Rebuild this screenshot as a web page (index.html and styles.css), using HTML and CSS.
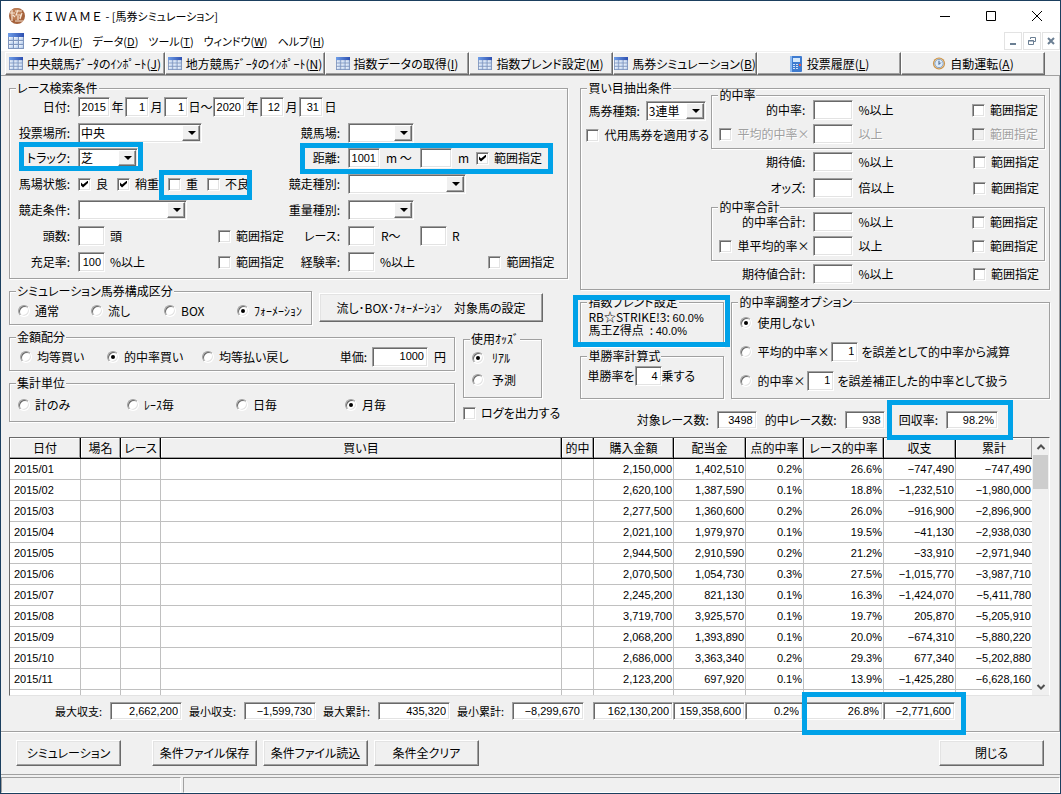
FILE: index.html
```html
<!DOCTYPE html>
<html lang="ja">
<head>
<meta charset="utf-8">
<title>ＫＩＷＡＭＥ - [馬券シミュレーション]</title>
<link rel="stylesheet" href="styles.css">
</head>
<body>
<svg class="defs" width="0" height="0" aria-hidden="true">
  <defs>
    <linearGradient id="gh" x1="0" y1="0" x2="1" y2="0"><stop offset="0" stop-color="#6f9ee8"/><stop offset="1" stop-color="#2d4fb0"/></linearGradient>
    <linearGradient id="gc" x1="0" y1="0" x2="1" y2="1"><stop offset="0" stop-color="#ffffff"/><stop offset="1" stop-color="#a9c4ea"/></linearGradient>
    <symbol id="grid" viewBox="0 0 16 16" preserveAspectRatio="none">
      <rect x="0" y="0" width="16" height="16" fill="#7f95bd"/>
      <rect x="0" y="0" width="16" height="4" fill="url(#gh)"/>
      <g fill="url(#gc)"><rect x="1" y="4" width="4" height="3"/><rect x="6" y="4" width="4" height="3"/><rect x="11" y="4" width="4" height="3"/><rect x="1" y="8" width="4" height="3"/><rect x="6" y="8" width="4" height="3"/><rect x="11" y="8" width="4" height="3"/><rect x="1" y="12" width="4" height="3"/><rect x="6" y="12" width="4" height="3"/><rect x="11" y="12" width="4" height="3"/></g>
    </symbol>
  </defs>
</svg>
<div class="window">
  <header class="titlebar">
    <svg class="logo" viewBox="0 0 18 18" aria-hidden="true"><circle cx="9" cy="9" r="8" fill="#a5623c"/><circle cx="8" cy="7" r="6" fill="#bd7e55"/><g stroke="#f6e3d2" stroke-width="1.2" fill="none"><path d="M4 3v11M2 6h5M7 4h7M10 3l-2 5h5l-1 3M7 14h8M10 9v4M14 6l-2 6M5 8l2 2"/></g></svg>
    <h1><span class="full">ＫＩＷＡＭＥ</span> - [馬券シミュレーション]</h1>
    <div class="wincontrols">
      <button aria-label="最小化"><svg viewBox="0 0 12 12"><path d="M1 6.500h10"/></svg></button>
      <button aria-label="最大化"><svg viewBox="0 0 12 12"><path d="M1.500 1.500h9v9h-9z"/></svg></button>
      <button aria-label="終了"><svg viewBox="0 0 12 12"><path d="M1 1l10 10M11 1L1 11"/></svg></button>
    </div>
  </header>
  <nav class="menubar">
    <svg class="ic16" aria-hidden="true"><use href="#grid"/></svg>
    <a href="#">ファイル(<u>F</u>)</a><a href="#">データ(<u>D</u>)</a><a href="#">ツール(<u>T</u>)</a><a href="#">ウィンドウ(<u>W</u>)</a><a href="#">ヘルプ(<u>H</u>)</a>
    <div class="mdicontrols">
      <button aria-label="子を最小化"><svg viewBox="0 0 10 10"><path d="M2 8h6" stroke-width="2"/></svg></button>
      <button aria-label="子を元に戻す"><svg viewBox="0 0 10 10"><path d="M3.500 3V1.500h5v4H7M1.500 4.500h5v4h-5zM1 5h6"/></svg></button>
      <button aria-label="子を閉じる"><svg viewBox="0 0 10 10"><path d="M2 2l6 6M8 2L2 8" stroke-width="2"/></svg></button>
    </div>
  </nav>
  <div class="toolbar">
    <button><svg class="ic14" aria-hidden="true"><use href="#grid"/></svg><span>中央競馬ﾃﾞｰﾀのｲﾝﾎﾟｰﾄ(<u>J</u>)</span></button>
    <button><svg class="ic14" aria-hidden="true"><use href="#grid"/></svg><span>地方競馬ﾃﾞｰﾀのｲﾝﾎﾟｰﾄ(<u>N</u>)</span></button>
    <button><svg class="ic14" aria-hidden="true"><use href="#grid"/></svg><span>指数データの取得(<u>I</u>)</span></button>
    <button><svg class="ic14" aria-hidden="true"><use href="#grid"/></svg><span>指数ブレンド設定(<u>M</u>)</span></button>
    <button><svg class="ic14" aria-hidden="true"><use href="#grid"/></svg><span>馬券シミュレーション(<u>B</u>)</span></button>
    <button><svg class="ic16b" viewBox="0 0 14 16" aria-hidden="true"><rect x="1" y="0" width="12" height="16" rx="1" fill="#3e7bd0"/><rect x="1" y="0" width="2" height="16" fill="#8bb8f0"/><rect x="4" y="2" width="7" height="4" fill="#d5e8fb"/><g fill="#cfe0f7"><rect x="4" y="8" width="2" height="1"/><rect x="7" y="8" width="2" height="1"/><rect x="4" y="10" width="2" height="1"/><rect x="7" y="10" width="2" height="1"/><rect x="4" y="12" width="2" height="1"/><rect x="7" y="12" width="2" height="1"/></g><rect x="10" y="8" width="2" height="2" fill="#e2574c"/></svg><span>投票履歴(<u>L</u>)</span></button>
    <button><svg class="ic14" viewBox="0 0 14 14" aria-hidden="true"><circle cx="7" cy="7" r="6.500" fill="#c98f45"/><circle cx="7" cy="7" r="5.500" fill="#f3d39a"/><circle cx="7" cy="7" r="4.500" fill="#dcebfb" stroke="#7d9cc4"/><path d="M7 4v4l2-2" fill="none" stroke="#33527d"/></svg><span>自動運転(<u>A</u>)</span></button>
  </div>

  <main class="client">
    <div class="forms">
      <div class="leftcol">
        <fieldset>
          <legend>レース検索条件</legend>
          <div class="search">
            <label class="lab" for="y1">日付:</label>
            <div class="cell dates">
              <input class="w32" id="y1" value="2015"><span>年</span><input class="w24" aria-label="開始月" value="1"><span>月</span><input class="w24" aria-label="開始日" value="1"><span class="wide">日～</span><input class="w32" aria-label="終了年" value="2020"><span>年</span><input class="w24" aria-label="終了月" value="12"><span>月</span><input class="w24" aria-label="終了日" value="31"><span>日</span>
            </div>
            <span></span><span></span>

            <label class="lab" for="place">投票場所:</label>
            <div class="cell"><span class="combo c124"><select id="place"><option>中央</option></select></span></div>
            <label class="lab" for="course">競馬場:</label>
            <div class="cell"><span class="combo c66"><select id="course"><option></option></select></span></div>

            <label class="lab" for="track">トラック:</label>
            <div class="cell"><span class="combo c60"><select id="track"><option>芝</option></select></span><i class="mark m-track"></i></div>
            <label class="lab" for="dist">距離:</label>
            <div class="cell dist"><input class="w32" id="dist" value="1001"><span class="u40">m ～</span><input class="w32" aria-label="距離上限"><span class="u24">m</span><label class="opt"><input type="checkbox" checked>範囲指定</label><i class="mark m-dist"></i></div>

            <span class="lab">馬場状態:</span>
            <div class="cell going"><label class="opt"><input type="checkbox" checked>良</label><label class="opt"><input type="checkbox" checked>稍重</label><label class="opt"><input type="checkbox">重</label><label class="opt"><input type="checkbox">不良</label><i class="mark m-going"></i></div>
            <label class="lab" for="kind">競走種別:</label>
            <div class="cell"><span class="combo c118"><select id="kind"><option></option></select></span></div>

            <label class="lab" for="cond">競走条件:</label>
            <div class="cell"><span class="combo c109"><select id="cond"><option></option></select></span></div>
            <label class="lab" for="wt">重量種別:</label>
            <div class="cell"><span class="combo c66"><select id="wt"><option></option></select></span></div>

            <label class="lab" for="heads">頭数:</label>
            <div class="cell"><input class="w27" id="heads"><span class="unit">頭</span><label class="opt end"><input type="checkbox">範囲指定</label></div>
            <label class="lab" for="race">レース:</label>
            <div class="cell"><input class="w27" id="race"><span class="u45">R～</span><input class="w27" aria-label="レース上限"><span class="unit">R</span></div>

            <label class="lab" for="fill">充足率:</label>
            <div class="cell"><input class="w27" id="fill" value="100"><span class="unit">%以上</span><label class="opt end"><input type="checkbox">範囲指定</label></div>
            <label class="lab" for="exp">経験率:</label>
            <div class="cell exp"><input class="w27" id="exp"><span class="unit">%以上</span><label class="opt end"><input type="checkbox">範囲指定</label></div>
          </div>
        </fieldset>

        <div class="buildrow">
          <fieldset class="fs-kind">
            <legend>シミュレーション馬券構成区分</legend>
            <div class="radios four73">
              <label class="opt"><input type="radio" name="k">通常</label><label class="opt"><input type="radio" name="k">流し</label><label class="opt"><input type="radio" name="k">BOX</label><label class="opt"><input type="radio" name="k" checked>ﾌｫｰﾒｰｼｮﾝ</label>
            </div>
          </fieldset>
          <button class="btn target">流し･BOX･ﾌｫｰﾒｰｼｮﾝ　対象馬の設定</button>
        </div>

        <div class="moneyrow">
          <div class="stack">
            <fieldset>
              <legend>金額配分</legend>
              <div class="radios money">
                <label class="opt"><input type="radio" name="m">均等買い</label><label class="opt"><input type="radio" name="m" checked>的中率買い</label><label class="opt"><input type="radio" name="m">均等払い戻し</label>
                <label class="price" for="price">単価:</label><input class="w56" id="price" value="1000"><span class="yen">円</span>
              </div>
            </fieldset>
            <fieldset>
              <legend>集計単位</legend>
              <div class="radios four109">
                <label class="opt"><input type="radio" name="s">計のみ</label><label class="opt"><input type="radio" name="s">ﾚｰｽ毎</label><label class="opt"><input type="radio" name="s">日毎</label><label class="opt"><input type="radio" name="s" checked>月毎</label>
              </div>
            </fieldset>
          </div>
          <div class="oddscol">
            <fieldset>
              <legend>使用ｵｯｽﾞ</legend>
              <div class="oddsradios"><label class="opt"><input type="radio" name="o" checked>ﾘｱﾙ</label><label class="opt"><input type="radio" name="o">予測</label></div>
            </fieldset>
            <label class="opt log"><input type="checkbox">ログを出力する</label>
          </div>
        </div>
      </div>

      <div class="rightcol">
        <fieldset>
          <legend>買い目抽出条件</legend>
          <div class="extract">
            <div class="ticket">
              <div class="cell"><label for="tk">馬券種類:</label><span class="combo c60"><select id="tk"><option>3連単</option></select></span></div>
              <label class="opt sub"><input type="checkbox">代用馬券を適用する</label>
            </div>
            <div class="conds">
              <fieldset class="inner">
                <legend>的中率</legend>
                <div class="innerrows">
                  <div class="cond"><label class="lab" for="c1">的中率:</label><input id="c1"><span>%以上</span><label class="opt"><input type="checkbox">範囲指定</label></div>
                  <div class="cond off"><label class="opt mul"><input type="checkbox">平均的中率×</label><input aria-label="平均的中率"><span>以上</span><label class="opt"><input type="checkbox" disabled>範囲指定</label></div>
                </div>
              </fieldset>
              <div class="cond tall"><label class="lab" for="c3">期待値:</label><input id="c3"><span>%以上</span><label class="opt"><input type="checkbox">範囲指定</label></div>
              <div class="cond tall"><label class="lab" for="c4">オッズ:</label><input id="c4"><span>倍以上</span><label class="opt"><input type="checkbox">範囲指定</label></div>
              <fieldset class="inner">
                <legend>的中率合計</legend>
                <div class="innerrows">
                  <div class="cond"><label class="lab" for="c5">的中率合計:</label><input id="c5"><span>%以上</span><label class="opt"><input type="checkbox">範囲指定</label></div>
                  <div class="cond"><label class="opt mul"><input type="checkbox">単平均的率×</label><input aria-label="単平均的率"><span>以上</span><label class="opt"><input type="checkbox">範囲指定</label></div>
                </div>
              </fieldset>
              <div class="cond tall"><label class="lab" for="c7">期待値合計:</label><input id="c7"><span>%以上</span><label class="opt"><input type="checkbox">範囲指定</label></div>
            </div>
          </div>
        </fieldset>

        <div class="blendrow">
          <div class="blendcol">
            <fieldset class="blend">
              <legend>指数ブレンド設定</legend>
              <p>RB☆STRIKE!3: <span class="num">60.0%</span></p><p>馬王Z得点&ensp;: <span class="num">40.0%</span></p>
              <i class="mark m-blend"></i>
            </fieldset>
            <fieldset class="formula">
              <legend>単勝率計算式</legend>
              <div class="cell"><label for="pow">単勝率を</label><input class="w27" id="pow" value="4"><span>乗する</span></div>
            </fieldset>
          </div>
          <fieldset class="adjust">
            <legend>的中率調整オプション</legend>
            <div class="adj"><label class="opt"><input type="radio" name="a" checked>使用しない</label></div>
            <div class="adj"><label class="opt"><input type="radio" name="a">平均的中率×</label><input class="w27" aria-label="減算誤差" value="1"><span>を誤差として的中率から減算</span></div>
            <div class="adj"><label class="opt"><input type="radio" name="a">的中率×</label><input class="w27" aria-label="補正誤差" value="1"><span>を誤差補正した的中率として扱う</span></div>
          </fieldset>
        </div>

        <div class="stats">
          <label for="n1">対象レース数:</label><input class="w40" id="n1" value="3498">
          <label for="n2">的中レース数:</label><input class="w40" id="n2" value="938">
          <div class="cell ret"><label for="n3">回収率:</label><input class="w52" id="n3" value="98.2%"><i class="mark m-ret"></i></div>
        </div>
      </div>
    </div>

    <div class="gridbox">
      <div class="view">
        <table>
          <colgroup><col class="k70"><col class="k40"><col class="k40"><col><col class="k32"><col class="k80"><col class="k72"><col class="k58"><col class="k80"><col class="k72"><col class="k76"></colgroup>
          <thead><tr><th>日付</th><th>場名</th><th>レース</th><th>買い目</th><th>的中</th><th>購入金額</th><th>配当金</th><th>点的中率</th><th>レース的中率</th><th>収支</th><th>累計</th></tr></thead>
          <tbody>
            <tr><td>2015/01</td><td></td><td></td><td></td><td></td><td>2,150,000</td><td>1,402,510</td><td>0.2%</td><td>26.6%</td><td>−747,490</td><td>−747,490</td></tr>
            <tr><td>2015/02</td><td></td><td></td><td></td><td></td><td>2,620,100</td><td>1,387,590</td><td>0.1%</td><td>18.8%</td><td>−1,232,510</td><td>−1,980,000</td></tr>
            <tr><td>2015/03</td><td></td><td></td><td></td><td></td><td>2,277,500</td><td>1,360,600</td><td>0.2%</td><td>26.0%</td><td>−916,900</td><td>−2,896,900</td></tr>
            <tr><td>2015/04</td><td></td><td></td><td></td><td></td><td>2,021,100</td><td>1,979,970</td><td>0.1%</td><td>19.5%</td><td>−41,130</td><td>−2,938,030</td></tr>
            <tr><td>2015/05</td><td></td><td></td><td></td><td></td><td>2,944,500</td><td>2,910,590</td><td>0.2%</td><td>21.2%</td><td>−33,910</td><td>−2,971,940</td></tr>
            <tr><td>2015/06</td><td></td><td></td><td></td><td></td><td>2,070,500</td><td>1,054,730</td><td>0.3%</td><td>27.5%</td><td>−1,015,770</td><td>−3,987,710</td></tr>
            <tr><td>2015/07</td><td></td><td></td><td></td><td></td><td>2,245,200</td><td>821,130</td><td>0.1%</td><td>16.3%</td><td>−1,424,070</td><td>−5,411,780</td></tr>
            <tr><td>2015/08</td><td></td><td></td><td></td><td></td><td>3,719,700</td><td>3,925,570</td><td>0.1%</td><td>19.7%</td><td>205,870</td><td>−5,205,910</td></tr>
            <tr><td>2015/09</td><td></td><td></td><td></td><td></td><td>2,068,200</td><td>1,393,890</td><td>0.1%</td><td>20.0%</td><td>−674,310</td><td>−5,880,220</td></tr>
            <tr><td>2015/10</td><td></td><td></td><td></td><td></td><td>2,686,000</td><td>3,363,340</td><td>0.2%</td><td>29.3%</td><td>677,340</td><td>−5,202,880</td></tr>
            <tr><td>2015/11</td><td></td><td></td><td></td><td></td><td>2,123,200</td><td>697,920</td><td>0.1%</td><td>13.9%</td><td>−1,425,280</td><td>−6,628,160</td></tr>
            <tr><td></td><td></td><td></td><td></td><td></td><td></td><td></td><td></td><td></td><td></td><td></td></tr>
          </tbody>
        </table>
      </div>
      <div class="scroll">
        <button aria-label="上へ"><svg viewBox="0 0 10 10"><path d="M1.500 7L5 3.500 8.500 7"/></svg></button>
        <span class="thumb"></span>
        <button aria-label="下へ"><svg viewBox="0 0 10 10"><path d="M1.500 3L5 6.500 8.500 3"/></svg></button>
      </div>
    </div>

    <div class="totals">
      <div class="extremes">
        <label for="t1">最大収支:</label><input id="t1" value="2,662,200">
        <label for="t2">最小収支:</label><input id="t2" value="−1,599,730">
        <label for="t3">最大累計:</label><input id="t3" value="435,320">
        <label for="t4">最小累計:</label><input id="t4" value="−8,299,670">
      </div>
      <div class="sums">
        <input class="w80" aria-label="購入金額計" value="162,130,200"><input class="w72" aria-label="配当金計" value="159,358,600"><input class="w58" aria-label="点的中率計" value="0.2%"><input class="w80" aria-label="レース的中率計" value="26.8%"><input class="w72" aria-label="収支計" value="−2,771,600">
        <i class="mark m-sum"></i>
      </div>
    </div>
  </main>

  <div class="actions">
    <button class="btn first">シミュレーション</button>
    <button class="btn">条件ファイル保存</button>
    <button class="btn">条件ファイル読込</button>
    <button class="btn">条件全クリア</button>
    <button class="btn last">閉じる</button>
  </div>
  <footer class="status"><span class="p1"></span><span class="p2"></span></footer>
</div>
</body>
</html>
```

FILE: styles.css
```css
* { box-sizing: border-box; }
body {
  margin: 0;
  background: #f0f0f0;
  color: #000;
  font: 12px/14px "Noto Sans CJK JP", sans-serif;
  font-feature-settings: "palt";
}
button, input, select, table { font: inherit; color: inherit; font-feature-settings: inherit; }
.defs { position: absolute; }
.window {
  min-height: 100vh;
  height: 100vh;
  display: flex;
  flex-direction: column;
  border: 1px solid #1b3f5f;
  white-space: nowrap;
}

/* title and menu */
.titlebar { height: 29px; flex: none; display: flex; align-items: center; background: #fff; padding-left: 7px; }
.logo { width: 18px; height: 18px; }
h1 { margin: 0 0 0 5px; font-size: 11px; font-weight: 400; flex: 1; }
.full { font-size: 12px; font-feature-settings: normal; }
.wincontrols { display: flex; }
.wincontrols button { width: 46px; height: 28px; border: 0; background: none; padding: 0; }
.wincontrols svg { width: 12px; height: 12px; display: block; margin: auto; }
svg path { fill: none; }
.wincontrols path { stroke: #000; }
.menubar { height: 21px; flex: none; display: flex; align-items: center; background: #fff; padding-left: 7px; font-size: 11px; }
.menubar a { color: #000; text-decoration: none; margin-right: 10px; }
.ic16 { width: 16px; height: 16px; margin-right: 7px; }
.ic16b { width: 14px; height: 16px; flex: none; }
.mdicontrols { margin-left: auto; display: flex; gap: 1px; }
.mdicontrols button { width: 18px; height: 18px; border: 1px solid #e3e3e3; background: #fff; padding: 0; }
.mdicontrols svg { width: 10px; height: 10px; display: block; margin: auto; }
.mdicontrols path { stroke: #6b7f93; }

.toolbar { flex: none; display: grid; grid-template-columns: 160fr 160fr repeat(5, 144fr); padding: 1px 15px 0 4px; height: 25px; border-bottom: 1px solid #a0a0a0; }
.toolbar button {
  display: flex; align-items: center; justify-content: center; gap: 4px; padding: 0; min-width: 0;
  background: #f0f0f0; border: 1px solid; border-color: #fff #696969 #696969 #fff;
  box-shadow: inset -1px -1px #a0a0a0;
}
.ic14 { width: 14px; height: 13px; flex: none; }

/* shared controls */
fieldset { position: relative; margin: 0; padding: 0; min-width: 0; border: 1px solid #a0a0a0; box-shadow: 1px 1px #fff, inset 1px 1px #fff; }
legend { margin-left: 6px; padding: 0 1px; line-height: 12px; height: 12px; background: #f0f0f0; }
input:not([type="checkbox"]):not([type="radio"]) {
  height: 20px; margin: 0; padding: 0 3px 1px 2px; text-align: right; border-radius: 0;
  background: #fff; border: 1px solid; border-color: #a0a0a0 #fff #fff #a0a0a0;
  box-shadow: inset 1px 1px #696969, inset -1px -1px #e3e3e3; flex: none;
}
input[type="checkbox"], input[type="radio"] { appearance: none; flex: none; margin: 0; background: #fff; border: 1px solid; border-color: #a0a0a0 #fff #fff #a0a0a0; }
input[type="checkbox"] { width: 13px; height: 13px; box-shadow: inset 1px 1px #696969, inset -1px -1px #e3e3e3; }
input[type="checkbox"]:disabled { background: #f0f0f0; }
input[type="checkbox"]:checked::before { content: ""; display: block; width: 7px; height: 7px; margin: 2px; background: #000; clip-path: polygon(0 29%, 29% 57%, 100% 0, 100% 36%, 29% 100%, 0 71%); }
input[type="radio"] { width: 12px; height: 12px; border-radius: 50%; box-shadow: inset 1px 1px #696969, inset -1px -1px #e3e3e3; }
input[type="radio"]:checked::before { content: ""; display: block; width: 4px; height: 4px; margin: 3px; border-radius: 50%; background: #000; }
.opt { display: flex; align-items: center; gap: 5px; }
.combo { display: flex; height: 20px; background: #fff; border: 1px solid; border-color: #a0a0a0 #fff #fff #a0a0a0; box-shadow: inset 1px 1px #696969, inset -1px -1px #e3e3e3; padding: 1px; position: relative; }
.combo select { appearance: none; border: 0; background: none; padding: 0 18px 0 1px; flex: 1; min-width: 0; border-radius: 0; }
.combo::before { content: ""; position: absolute; right: 1px; top: 1px; bottom: 1px; width: 16px; background: #f0f0f0; border: 1px solid; border-color: #fff #696969 #696969 #fff; box-shadow: inset -1px -1px #a0a0a0; pointer-events: none; }
.combo::after { content: ""; position: absolute; right: 5px; top: 7px; border: 4px solid transparent; border-top-color: #000; border-bottom: 0; pointer-events: none; }
.btn { height: 26px; padding: 0; background: #f0f0f0; border: 1px solid; border-color: #fff #696969 #696969 #fff; box-shadow: inset -1px -1px #a0a0a0, inset 1px 1px #e3e3e3; }
.mark { position: absolute; border: 5px solid #00a2e8; pointer-events: none; z-index: 2; }
.cell { display: flex; align-items: center; position: relative; }
td, input, .num { font-family: "Liberation Sans", "Noto Sans CJK JP", sans-serif; font-size: 11px; }
.w24 { width: 24px; } .w27 { width: 27px; } .w32 { width: 32px; } .w40 { width: 40px; }
.w52 { width: 52px; } .w56 { width: 56px; } .w58 { width: 58px; } .w72 { width: 72px; } .w80 { width: 80px; }
.c60 { width: 60px; } .c66 { width: 66px; } .c109 { width: 109px; } .c118 { width: 118px; } .c124 { width: 124px; }

/* form area */
.client { flex: 1; min-height: 0; display: flex; flex-direction: column; padding: 6px 9px 0 8px; border-right: 1px solid #a0a0a0; }
.forms { flex: none; display: grid; grid-template-columns: 560fr 470fr; gap: 12px; }
.leftcol { display: flex; flex-direction: column; gap: 6px; }
.search { display: grid; grid-template-columns: 68px 206px 64px 1fr; grid-template-rows: 26px 25px repeat(5, 26px); align-items: stretch; height: 184px; }
.search .lab { text-align: right; padding-right: 8px; align-self: center; }
.dates span { width: 15px; text-align: center; flex: none; }
.dates .wide { width: 25px; }
.unit { padding-left: 5px; }
.u40 { width: 40px; padding-left: 6px; }
.u24 { width: 24px; padding-left: 6px; }
.u45 { width: 45px; padding-left: 6px; }
.going { gap: 9px; }
.end { margin-left: auto; }
.exp { padding-right: 13px; }
.m-track { left: -59px; top: -3px; width: 124px; height: 29px; }
.m-going { left: 81px; top: -1px; width: 93px; height: 30px; }
.m-dist { left: -48px; top: -2px; width: 253px; height: 31px; }

.buildrow { display: flex; gap: 7px; align-items: flex-start; }
.fs-kind { width: 303px; }
.radios { display: grid; align-items: center; height: 27px; padding-left: 8px; }
.four73 { grid-template-columns: repeat(3, 73px) 1fr; }
.four109 { grid-template-columns: repeat(3, 109px) 1fr; height: 32px; }
.target { width: 224px; height: 29px; margin-top: 8px; }
.moneyrow { display: flex; gap: 8px; }
.stack { width: 446px; display: flex; flex-direction: column; gap: 6px; }
.money { grid-template-columns: 87px 95px 1fr auto 56px 26px; padding-left: 10px; }
.price { margin-right: 5px; }
.yen { padding-left: 6px; }
.oddscol { width: 100px; padding-top: 2px; }
.oddscol fieldset { width: 79px; }
.oddsradios { display: grid; grid-template-rows: 22px 22px; padding: 2px 0 6px 8px; }
.oddsradios .opt { gap: 8px; }
.log { margin-top: 8px; }

.extract { display: flex; margin-top: -5px; }
.ticket { width: 130px; padding: 10px 0 0 5px; flex: none; }
.ticket .cell { height: 24px; gap: 6px; padding-left: 2px; }
.sub { height: 24px; }
.conds { flex: 1; padding: 0 4px 2px 0; }
.innerrows { margin-top: -3px; padding-bottom: 2px; }
.cond { display: grid; grid-template-columns: 101px 40px 1fr auto; align-items: center; height: 24px; padding-right: 6px; }
.cond .lab { text-align: right; padding-right: 8px; }
.cond > span { padding-left: 5px; }
.cond.tall { height: 26px; padding-left: 1px; }
.mul { padding-left: 7px; }
.off, .off input { color: #a0a0a0; text-shadow: 1px 1px #fff; }
.blendrow { display: flex; gap: 7px; margin-top: 6px; }
.blendcol { width: 144px; flex: none; display: flex; flex-direction: column; gap: 3px; }
.blend { height: 51px; }
.blend p { margin: 0; padding-left: 7px; line-height: 12px; }
.blend legend { margin-bottom: 3px; }
.m-blend { left: -8px; top: -16px; width: 157px; height: 52px; }
.formula { height: 49px; }
.formula .cell { height: 28px; padding-left: 6px; }
.formula input { margin: 0 6px 0 5px; }
.adjust { flex: 1; height: 103px; }
.adj { display: flex; align-items: center; height: 29px; padding-left: 8px; }
.adj input.w27 { margin: 0 3px 0 2px; }
.stats { display: flex; align-items: center; height: 38px; padding: 6px 52px 2px 0; justify-content: flex-end; gap: 8px; }
.stats input.w40, .stats input.w52 { height: 18px; }
.ret { gap: 8px; margin-left: 6px; }
.m-ret { left: -12px; top: -11px; width: 126px; height: 40px; }

/* result table */
.gridbox { flex: 1; min-height: 0; display: flex; border: 1px solid; border-color: #696969 #fff #e3e3e3 #696969; background: #fff; }
.view { flex: 1; min-width: 0; overflow: hidden; }
table { width: 100%; table-layout: fixed; border-collapse: separate; border-spacing: 0; }
.k70 { width: 71px; } .k40 { width: 40px; } .k32 { width: 32px; } .k80 { width: 80px; } .k72 { width: 72px; } .k58 { width: 58px; } .k76 { width: 76px; }
th, td { height: 21px; padding: 0 1px; overflow: hidden; }
th { font-weight: 400; background: #f0f0f0; border-right: 1px solid #000; border-bottom: 1px solid #000; box-shadow: inset -1px -1px #a0a0a0, inset 1px 1px #fff; }
td { text-align: right; border-right: 1px solid #c0c0c0; border-bottom: 1px solid #c0c0c0; }
td:first-child { text-align: left; padding-left: 4px; }
th:last-child, td:last-child { border-right: 0; }
.scroll { width: 17px; background: #f0f0f0; display: flex; flex-direction: column; }
.scroll button { height: 17px; border: 0; padding: 0; background: none; }
.scroll svg { width: 10px; height: 10px; display: block; margin: auto; }
.scroll path { stroke: #505050; stroke-width: 2; }
.thumb { height: 34px; background: #cdcdcd; margin: 0 1px auto; }

.totals { flex: none; display: flex; justify-content: space-between; height: 35px; padding: 6px 95px 0 43px; align-items: flex-start; font-size: 11px; }
.totals input { height: 18px !important; }
.extremes { display: flex; gap: 8px; align-items: center; }
.extremes label { width: 50px; text-align: right; }
.extremes label + input + label { margin-left: -4px; }
.extremes input { width: 72px; }
.sums { display: flex; position: relative; }
.m-sum { right: -11px; top: -10px; width: 164px; height: 43px; }

.actions { flex: none; display: flex; gap: 6px; height: 43px; padding: 8px 16px 0 15px; border-top: 1px solid #a0a0a0; box-shadow: inset 0 1px #fff; }
.actions .btn { width: 105px; }
.first { margin-right: 25px; }
.last { margin-left: auto; }
.status { flex: none; display: flex; gap: 2px; height: 19px; padding-top: 2px; border-top: 1px solid #a0a0a0; }
.status span { border: 1px solid; border-color: #a0a0a0 #fff #fff #a0a0a0; }
.p1 { width: 180px; }
.p2 { flex: 1; }
```
